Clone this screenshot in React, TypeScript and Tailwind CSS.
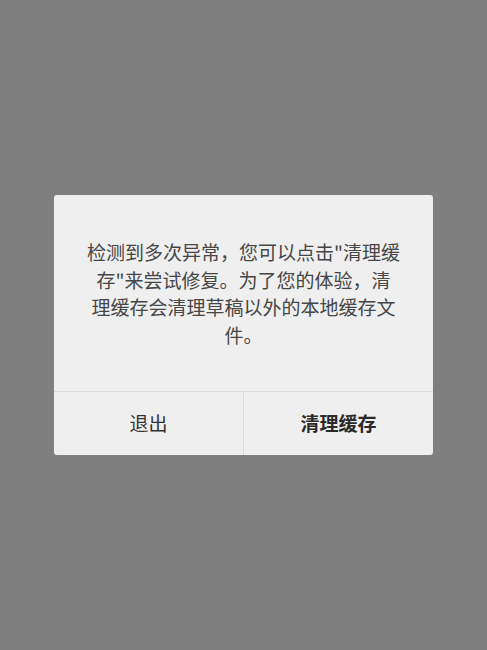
import React from 'react';

const cjk = { fontFamily: '"Noto Sans CJK SC", "Noto Sans", sans-serif' };

export default function App() {
  return (
    <div className="h-[650px] w-full bg-[#7f7f7f] flex items-center justify-center" style={cjk}>
      <div className="w-[379px] h-[260px] bg-[#efefef] rounded-[3px] flex flex-col overflow-hidden">
        <div className="flex-1 flex items-center justify-center px-6">
          <p className="text-[19px] leading-[27.5px] text-[#464646] text-center">
            检测到多次异常，您可以点击"清理缓
            <br />
            存"来尝试修复。为了您的体验，清
            <br />
            理缓存会清理草稿以外的本地缓存文
            <br />
            件。
          </p>
        </div>
        <div className="h-[64px] flex border-t border-[#dadada]">
          <button className="w-[190px] h-full flex items-center justify-center text-[19px] text-[#333333] border-r border-[#dadada]">
            退出
          </button>
          <button className="flex-1 h-full flex items-center justify-center text-[19px] font-bold text-[#2a2a2a]">
            清理缓存
          </button>
        </div>
      </div>
    </div>
  );
}
